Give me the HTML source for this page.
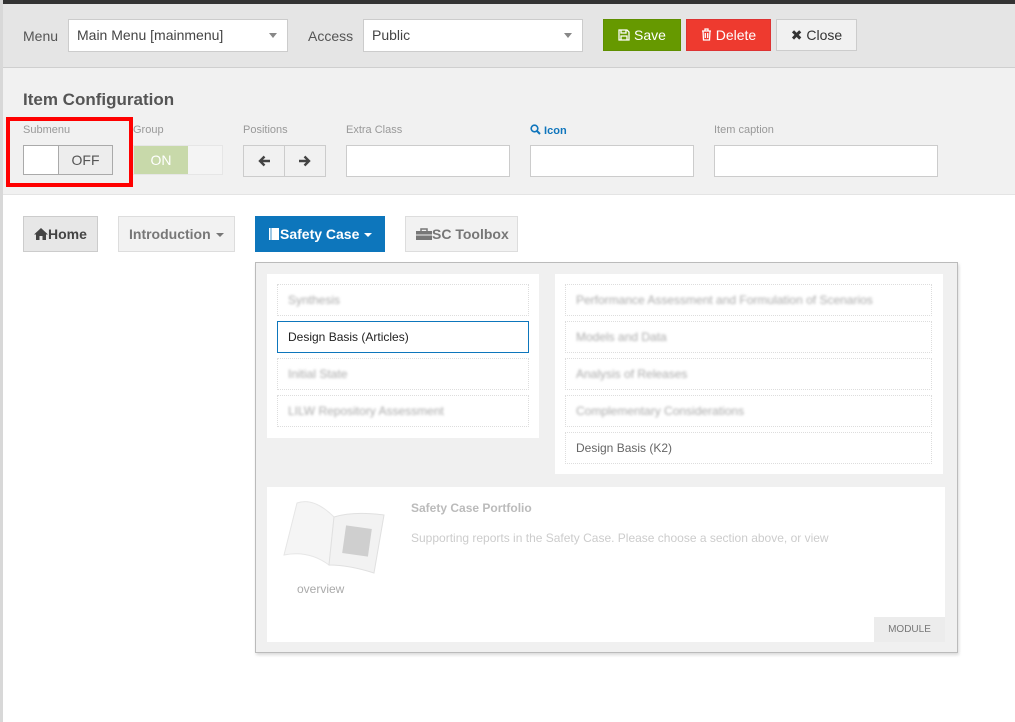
<!DOCTYPE html>
<html><head><meta charset="utf-8"><style>
*{box-sizing:border-box;margin:0;padding:0}
body{width:1015px;height:722px;overflow:hidden;background:#fff;font-family:"Liberation Sans",Arial,sans-serif;position:relative}
.a{position:absolute}
.top{left:0;top:0;width:1015px;height:4px;background:#333}
.lstrip{left:0;top:0;width:3px;height:722px;background:#d8d8d8}
.hdr{left:3px;top:4px;width:1012px;height:64px;background:#e5e5e5;border-bottom:1px solid #cfcfcf}
.cfg{left:3px;top:68px;width:1012px;height:127px;background:#f1f1f1;border-bottom:1px solid #e4e4e4}
.sel{background:#fff;border:1px solid #ccc;height:33px;font-size:14px;color:#444;padding:7px 8px}
.caret{position:absolute;right:10px;top:13px;border-left:4px solid transparent;border-right:4px solid transparent;border-top:5px solid #888}
.btn{height:32px;font-size:14px;line-height:30px;text-align:center;border:1px solid}
.lbl{font-size:11px;color:#999}
.inp{background:#fff;border:1px solid #ccc;height:32px}
.nav{height:36px;font-size:14px;font-weight:bold;line-height:34px;border:1px solid #ddd;color:#555;padding-left:10px}
.dc{display:inline-block;vertical-align:middle;margin-left:5px;border-left:4px solid transparent;border-right:4px solid transparent;border-top:4px solid currentColor}
.blur{color:#aaa;filter:blur(1.2px);font-size:12px}
.it{background:#fff;border:1px dotted #ddd;height:32px;font-size:12px;line-height:30px;padding-left:10px}
</style></head><body>
<div class="a top"></div>
<div class="a hdr"></div>
<div class="a cfg"></div>
<div class="a lstrip"></div>

<div class="a" style="left:23px;top:28px;font-size:14px;color:#555">Menu</div>
<div class="a sel" style="left:68px;top:19px;width:220px">Main Menu [mainmenu]<span class="caret"></span></div>
<div class="a" style="left:308px;top:28px;font-size:14px;color:#555">Access</div>
<div class="a sel" style="left:363px;top:19px;width:220px">Public<span class="caret"></span></div>
<div class="a btn" style="left:603px;top:19px;width:78px;background:#669900;border-color:#5f8f00;color:#fff"><svg width="12" height="12" viewBox="0 0 12 12" style="vertical-align:-1px"><path d="M1 1h8l2 2v8H1z M3 1v3h5V1 M3 11V7h6v4" fill="none" stroke="#fff" stroke-width="1.3"/></svg> Save</div>
<div class="a btn" style="left:686px;top:19px;width:85px;background:#ee3a2f;border-color:#d33;color:#fff"><svg width="11" height="13" viewBox="0 0 11 13" style="vertical-align:-1px"><path d="M1 3h9 M4 3V1h3v2 M2 3l.5 9h6L9 3 M4.3 5v5 M6.7 5v5" fill="none" stroke="#fff" stroke-width="1.3"/></svg> Delete</div>
<div class="a btn" style="left:776px;top:19px;width:81px;background:#f1f1f1;border-color:#ccc;color:#333">✖ Close</div>

<div class="a" style="left:23px;top:90px;font-size:17px;font-weight:bold;color:#555">Item Configuration</div>
<div class="a lbl" style="left:23px;top:124px">Submenu</div>
<div class="a lbl" style="left:133px;top:124px">Group</div>
<div class="a lbl" style="left:243px;top:124px">Positions</div>
<div class="a lbl" style="left:346px;top:124px">Extra Class</div>
<div class="a lbl" style="left:530px;top:124px;color:#0f75bc;font-weight:bold"><svg width="11" height="11" viewBox="0 0 11 11" style="vertical-align:-1px"><circle cx="4.5" cy="4.5" r="3.3" fill="none" stroke="#0f75bc" stroke-width="1.6"/><path d="M7 7l3 3" stroke="#0f75bc" stroke-width="2"/></svg> Icon</div>
<div class="a lbl" style="left:714px;top:124px">Item caption</div>

<div class="a" style="left:23px;top:145px;width:90px;height:30px;border:1px solid #aaa;background:#fff">
 <div class="a" style="left:34px;top:0;width:54px;height:28px;background:#ededed;border-left:1px solid #aaa;font-size:14px;color:#555;text-align:center;line-height:28px">OFF</div></div>
<div class="a" style="left:133px;top:145px;width:90px;height:30px;border:1px solid #e6e6e6;background:#f4f4f4">
 <div class="a" style="left:0;top:0;width:54px;height:28px;background:#c8d9aa;color:#fff;font-size:14px;text-align:center;line-height:28px">ON</div></div>
<div class="a" style="left:243px;top:145px;width:83px;height:32px;border:1px solid #ccc;background:#f1f1f1">
 <div class="a" style="left:40px;top:0;width:1px;height:30px;background:#ccc"></div>
 <svg class="a" style="left:14px;top:9px" width="13" height="12" viewBox="0 0 13 12"><path d="M12 6H3 M6.5 1.5L2 6l4.5 4.5" fill="none" stroke="#444" stroke-width="2.4"/></svg>
 <svg class="a" style="left:54px;top:9px" width="13" height="12" viewBox="0 0 13 12"><path d="M1 6h9 M6.5 1.5L11 6l-4.5 4.5" fill="none" stroke="#444" stroke-width="2.4"/></svg></div>
<div class="a inp" style="left:346px;top:145px;width:164px"></div>
<div class="a inp" style="left:530px;top:145px;width:164px"></div>
<div class="a inp" style="left:714px;top:145px;width:224px"></div>
<div class="a" style="left:6px;top:117px;width:127px;height:70px;border:4px solid #f00"></div>

<div class="a nav" style="left:23px;top:216px;width:75px;background:#e7e7e7;border-color:#ccc;color:#444"><svg width="14" height="12" viewBox="0 0 14 12" style="vertical-align:-1px"><path d="M7 0L0 6.5h2V12h3.5V8h3v4H12V6.5h2z" fill="#444"/></svg>Home</div>
<div class="a nav" style="left:118px;top:216px;width:117px;background:#f2f2f2;color:#777">Introduction<span class="dc"></span></div>
<div class="a nav" style="left:255px;top:216px;width:130px;background:#0d76bc;border-color:#0d76bc;color:#fff;padding-left:12px"><svg width="12" height="13" viewBox="0 0 12 13" style="vertical-align:-1px"><path d="M1 1h10v12H1z" fill="#fff"/><path d="M3 1v12" stroke="#0d76bc" stroke-width=".8"/></svg>Safety Case<span class="dc"></span></div>
<div class="a nav" style="left:405px;top:216px;width:113px;background:#f2f2f2;color:#777"><svg width="16" height="12" viewBox="0 0 16 12" style="vertical-align:-1px"><path d="M5 3V1h6v2" fill="none" stroke="#777" stroke-width="1.5"/><rect x="0" y="3" width="16" height="9" fill="#777"/><path d="M0 7h16" stroke="#f2f2f2"/></svg>SC Toolbox</div>

<div class="a" style="left:255px;top:262px;width:703px;height:391px;border:1px solid #bbb;background:#f0f0f0;box-shadow:1px 2px 3px rgba(0,0,0,.15)">
 <div class="a" style="left:11px;top:11px;width:272px;height:164px;background:#fff"></div>
 <div class="a" style="left:299px;top:11px;width:388px;height:200px;background:#fff"></div>
 <div class="a it" style="left:21px;top:21px;width:252px"><span class="blur">Synthesis</span></div>
 <div class="a it" style="left:21px;top:58px;width:252px;border:1px solid #0d76bc;color:#222">Design Basis (Articles)</div>
 <div class="a it" style="left:21px;top:95px;width:252px"><span class="blur">Initial State</span></div>
 <div class="a it" style="left:21px;top:132px;width:252px"><span class="blur">LILW Repository Assessment</span></div>
 <div class="a it" style="left:309px;top:21px;width:367px"><span class="blur">Performance Assessment and Formulation of Scenarios</span></div>
 <div class="a it" style="left:309px;top:58px;width:367px"><span class="blur">Models and Data</span></div>
 <div class="a it" style="left:309px;top:95px;width:367px"><span class="blur">Analysis of Releases</span></div>
 <div class="a it" style="left:309px;top:132px;width:367px"><span class="blur">Complementary Considerations</span></div>
 <div class="a it" style="left:309px;top:169px;width:367px;color:#666">Design Basis (K2)</div>
 <div class="a" style="left:11px;top:224px;width:678px;height:155px;background:#fff">
  <svg class="a" style="left:12px;top:8px" width="110" height="80" viewBox="0 0 110 80"><path d="M18 8 Q35 2 55 22 L50 70 Q30 55 5 60 Z" fill="#f5f5f5" stroke="#e6e6e6"/><path d="M55 22 Q75 16 105 20 L95 78 Q70 70 50 70 Z" fill="#f2f2f2" stroke="#e0e0e0"/><rect x="65" y="32" width="26" height="28" fill="#cfcfcf" transform="rotate(8 78 46)"/></svg>
  <div class="a" style="left:30px;top:95px;font-size:12px;color:#aaa">overview</div>
  <div class="a" style="left:144px;top:14px;font-size:12px;font-weight:bold;color:#bbb">Safety Case Portfolio</div>
  <div class="a" style="left:144px;top:44px;font-size:12px;color:#ccc">Supporting reports in the Safety Case. Please choose a section above, or view</div>
  <div class="a" style="left:607px;top:130px;width:71px;height:25px;background:#ececec;font-size:10px;color:#777;text-align:center;line-height:25px">MODULE</div>
 </div>
</div>
</body></html>
